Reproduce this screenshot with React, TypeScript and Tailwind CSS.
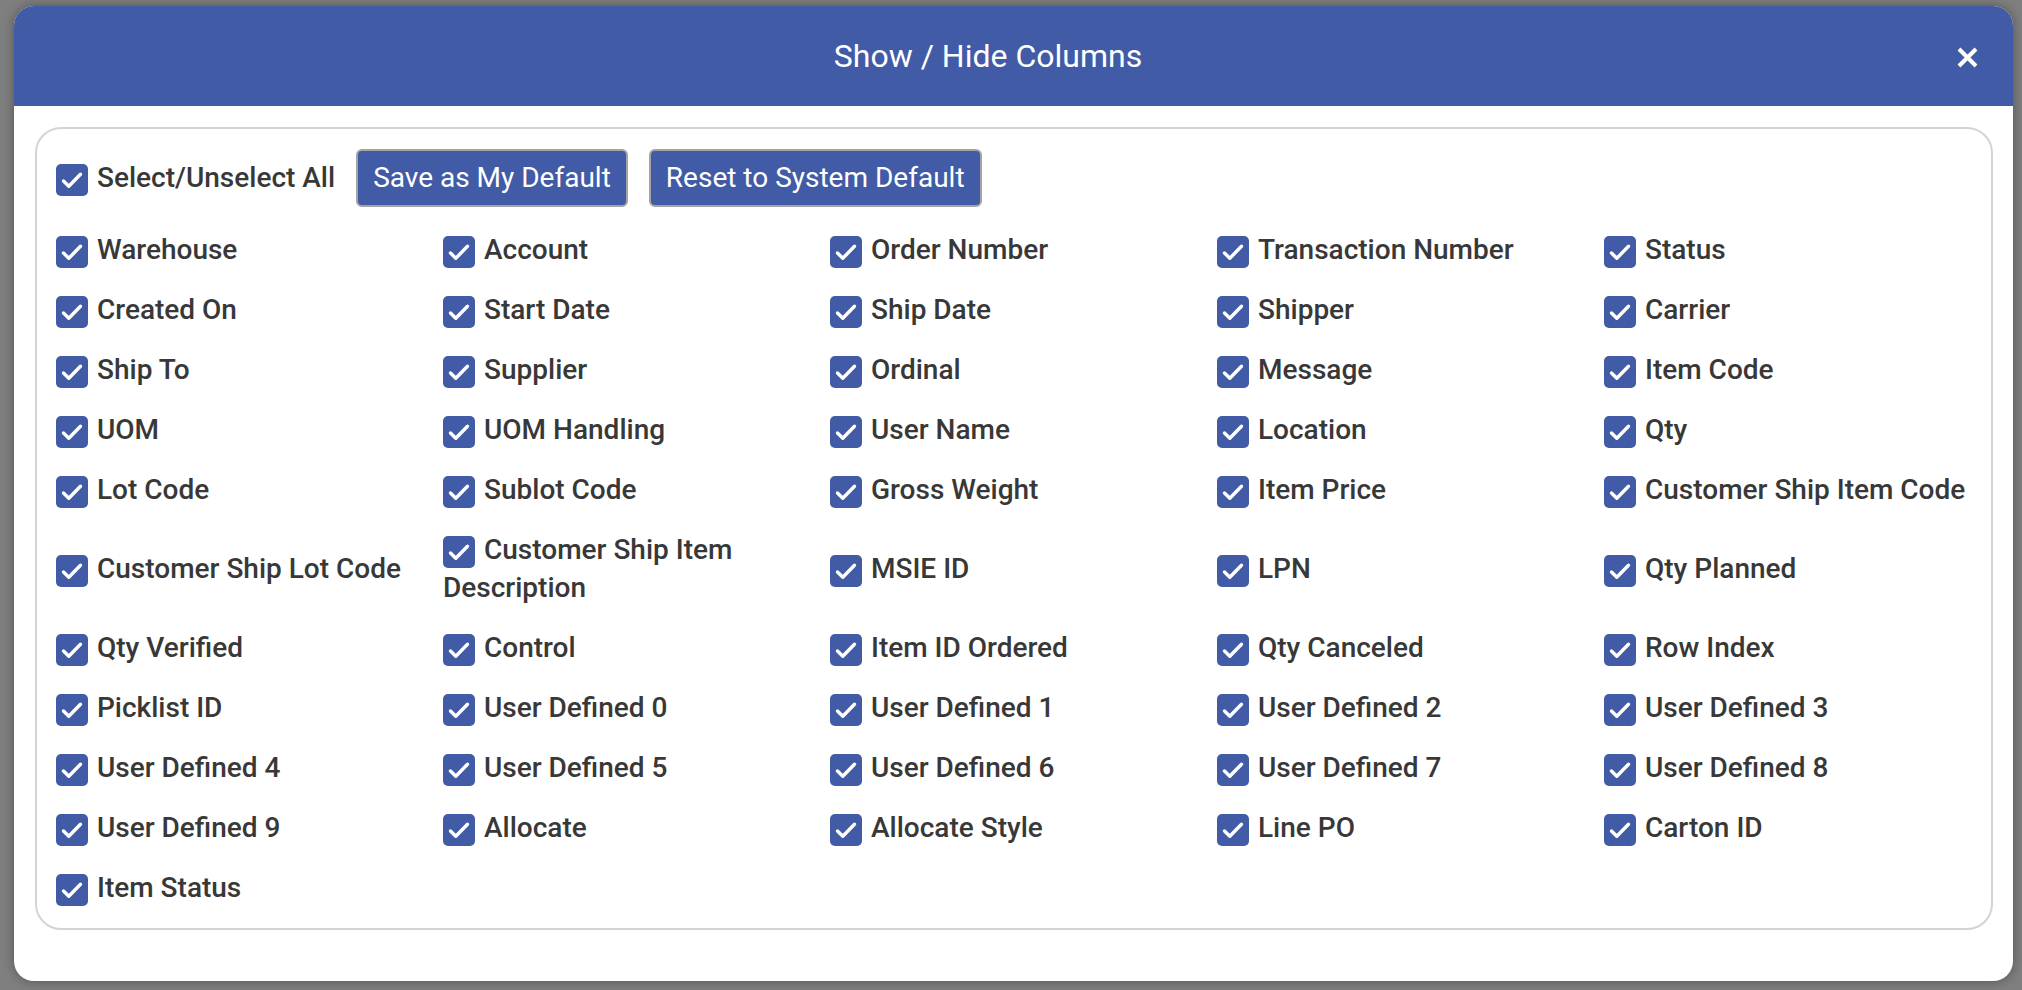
const columns = [
  'Warehouse', 'Account', 'Order Number', 'Transaction Number', 'Status',
  'Created On', 'Start Date', 'Ship Date', 'Shipper', 'Carrier',
  'Ship To', 'Supplier', 'Ordinal', 'Message', 'Item Code',
  'UOM', 'UOM Handling', 'User Name', 'Location', 'Qty',
  'Lot Code', 'Sublot Code', 'Gross Weight', 'Item Price', 'Customer Ship Item Code',
  'Customer Ship Lot Code', 'Customer Ship Item Description', 'MSIE ID', 'LPN', 'Qty Planned',
  'Qty Verified', 'Control', 'Item ID Ordered', 'Qty Canceled', 'Row Index',
  'Picklist ID', 'User Defined 0', 'User Defined 1', 'User Defined 2', 'User Defined 3',
  'User Defined 4', 'User Defined 5', 'User Defined 6', 'User Defined 7', 'User Defined 8',
  'User Defined 9', 'Allocate', 'Allocate Style', 'Line PO', 'Carton ID',
  'Item Status',
]

function CheckBox() {
  return (
    <span className="inline-flex items-center justify-center align-middle w-[32px] h-[32px] rounded-[5px] bg-[#415ba6] mr-[9px]">
      <svg width="32" height="32" viewBox="0 0 32 32" fill="none">
        <path d="M7.5 17 L12.8 22.3 L24.5 10.3" stroke="#fff" strokeWidth="3.4" strokeLinecap="round" strokeLinejoin="round" />
      </svg>
    </span>
  )
}

function Button({ label }: { label: string }) {
  return (
    <button className="h-[58px] px-[15px] border-2 border-[#a3a3a3] rounded-[6px] bg-[#415ba6] text-white text-[28px] font-normal leading-[38px]">
      {label}
    </button>
  )
}

export default function App() {
  return (
    <div
      className="w-[2022px] h-[990px] bg-[#7f7f7f] pl-[14px] pt-[6px]"
      style={{ fontFamily: 'Roboto, "Liberation Sans", sans-serif' }}
    >
      <div className="w-[1999px] h-[975px] bg-white rounded-[20px] overflow-hidden flex flex-col shadow-[0_0_12px_rgba(0,0,0,0.35)]">
        {/* header */}
        <div className="h-[100px] bg-[#415ba6] flex items-center pl-[5px] pr-[35px]">
          <h2 className="flex-1 text-center text-white text-[32px] font-normal">Show / Hide Columns</h2>
          <button className="w-[21px] h-[21px] mt-[2px]">
            <svg width="21" height="21" viewBox="0 0 21 21">
              <path d="M2 2 L19 19 M19 2 L2 19" stroke="#fff" strokeWidth="4" />
            </svg>
          </button>
        </div>

        <div className="pl-[21px] pr-[20px] pt-[21px]">
          <div className="border-2 border-[#d4d4d4] rounded-[26px] pl-[19px] pt-[20px] pb-[10px] text-[#383838]">
            <div className="flex items-center h-[58px]">
              <label className="text-[28px] font-medium leading-[38px]">
                <CheckBox />
                Select/Unselect All
              </label>
              <div className="ml-[21px]">
                <Button label="Save as My Default" />
              </div>
              <div className="ml-[21px]">
                <Button label="Reset to System Default" />
              </div>
            </div>

            <div className="grid grid-cols-5 items-center mt-[13px]">
              {columns.map((name) => (
                <label key={name} className="py-[11px] text-[28px] font-medium leading-[38px]">
                  <CheckBox />
                  {name}
                </label>
              ))}
            </div>
          </div>
        </div>
      </div>
    </div>
  )
}
